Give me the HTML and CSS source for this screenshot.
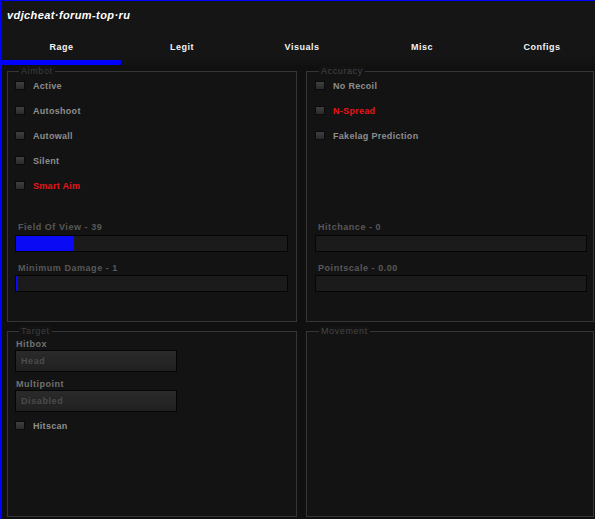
FILE: index.html
```html
<!DOCTYPE html>
<html>
<head>
<meta charset="utf-8">
<link rel="stylesheet" href="styles.css">
</head>
<body>
<div class="window">
  <header class="header">
    <div class="title">vdjcheat·forum-top·ru</div>
    <nav class="tabs">
      <div class="tab active">Rage</div>
      <div class="tab">Legit</div>
      <div class="tab">Visuals</div>
      <div class="tab">Misc</div>
      <div class="tab">Configs</div>
    </nav>
  </header>
  <main class="content">
    <section class="group">
      <span class="legend">Aimbot</span>
      <div class="checks">
        <div class="check"><span class="box"></span><span class="label">Active</span></div>
        <div class="check"><span class="box"></span><span class="label">Autoshoot</span></div>
        <div class="check"><span class="box"></span><span class="label">Autowall</span></div>
        <div class="check"><span class="box"></span><span class="label">Silent</span></div>
        <div class="check"><span class="box"></span><span class="label red">Smart Aim</span></div>
      </div>
      <div class="sliders">
        <div class="slider-label">Field Of View - 39</div>
        <div class="bar"><div class="fill" style="width:58px"></div></div>
        <div class="slider-label second">Minimum Damage - 1</div>
        <div class="bar"><div class="fill" style="width:2px"></div></div>
      </div>
    </section>
    <section class="group right">
      <span class="legend">Accuracy</span>
      <div class="checks">
        <div class="check"><span class="box"></span><span class="label">No Recoil</span></div>
        <div class="check"><span class="box"></span><span class="label red">N-Spread</span></div>
        <div class="check"><span class="box"></span><span class="label">Fakelag Prediction</span></div>
      </div>
      <div class="sliders">
        <div class="slider-label">Hitchance - 0</div>
        <div class="bar"></div>
        <div class="slider-label second">Pointscale - 0.00</div>
        <div class="bar"></div>
      </div>
    </section>
    <section class="group target">
      <span class="legend">Target</span>
      <div class="field-label">Hitbox</div>
      <div class="dropdown">Head</div>
      <div class="field-label second">Multipoint</div>
      <div class="dropdown">Disabled</div>
      <div class="check hitscan"><span class="box"></span><span class="label">Hitscan</span></div>
    </section>
    <section class="group right">
      <span class="legend">Movement</span>
    </section>
  </main>
</div>
</body>
</html>
```

FILE: styles.css
```css
html, body {
  margin: 0;
  padding: 0;
  background: #0d0d0d;
}

.window {
  width: 593px;
  height: 518px;
  border-left: 2px solid #0000ff;
  border-top: 1px solid #0000ff;
  background: #101010;
  overflow: hidden;
  font-family: "Liberation Sans", Arial, sans-serif;
  font-size: 9px;
  font-weight: bold;
  letter-spacing: 0.3px;
}

.header {
  background: #151515;
}

.title {
  height: 29px;
  line-height: 29px;
  padding-left: 5px;
  color: #ffffff;
  font-size: 11px;
  font-style: italic;
  letter-spacing: 0.4px;
}

.tabs {
  display: flex;
  height: 35px;
  background: linear-gradient(#151515 70%, #121212);
}

.tab {
  flex: none;
  width: 120px;
  box-sizing: border-box;
  height: 35px;
  padding-top: 4px;
  line-height: 26px;
  text-align: center;
  color: #f2f2f2;
  font-size: 9px;
  letter-spacing: 0.5px;
  border-bottom: 5px solid transparent;
}

.tab.active {
  border-bottom-color: #0000ff;
  width: 119px;
  margin-right: 1px;
}

.content {
  display: grid;
  grid-template-columns: 290px 288px;
  grid-template-rows: 251px 186px;
  column-gap: 9px;
  row-gap: 9px;
  padding: 6px 0 0 5px;
}

.group {
  position: relative;
  box-sizing: border-box;
  border: 1px solid #363636;
  background: #131313;
  padding: 9px 7px 0 7px;
}

.group.right {
  padding-left: 8px;
}

.legend {
  position: absolute;
  top: -6px;
  left: 11px;
  padding: 0 2px;
  line-height: 11px;
  background: #131313;
  color: #3e3e3e;
  font-weight: normal;
  letter-spacing: 0.6px;
}

.group.right .legend {
  left: 12px;
  color: #454545;
}

.checks {
  display: flex;
  flex-direction: column;
  gap: 16px;
  height: 140px;
}

.check {
  display: flex;
  align-items: center;
  height: 9px;
}

.box {
  flex: none;
  box-sizing: border-box;
  width: 10px;
  height: 9px;
  border: 1px solid #0b0b0b;
  background: linear-gradient(#3f3f3f, #2b2b2b);
  margin-right: 8px;
}

.label {
  color: #8e8e8e;
  line-height: 12px;
}

.label.red {
  color: #e8161c;
}

.slider-label {
  height: 12px;
  line-height: 12px;
  padding-left: 3px;
  margin-bottom: 2px;
  color: #585858;
  letter-spacing: 0.55px;
}

.slider-label.second {
  margin-top: 10px;
  margin-bottom: 1px;
}

.bar {
  box-sizing: border-box;
  width: 273px;
  height: 17px;
  border: 1px solid #050505;
  background: #1b1b1b;
}

.group.right .bar {
  width: 272px;
}

.fill {
  height: 100%;
  background: #0a0af5;
}

.group.target {
  padding-top: 7px;
}

.field-label {
  height: 11px;
  line-height: 11px;
  padding-left: 1px;
  color: #727272;
  letter-spacing: 0.5px;
}

.field-label.second {
  margin-top: 7px;
}

.dropdown {
  box-sizing: border-box;
  width: 162px;
  height: 22px;
  border: 1px solid #050505;
  background: linear-gradient(#2a2a2a, #202020);
  padding-left: 5px;
  line-height: 20px;
  color: #4c4c4c;
  letter-spacing: 0.6px;
}

.check.hitscan {
  margin-top: 9px;
}
```
